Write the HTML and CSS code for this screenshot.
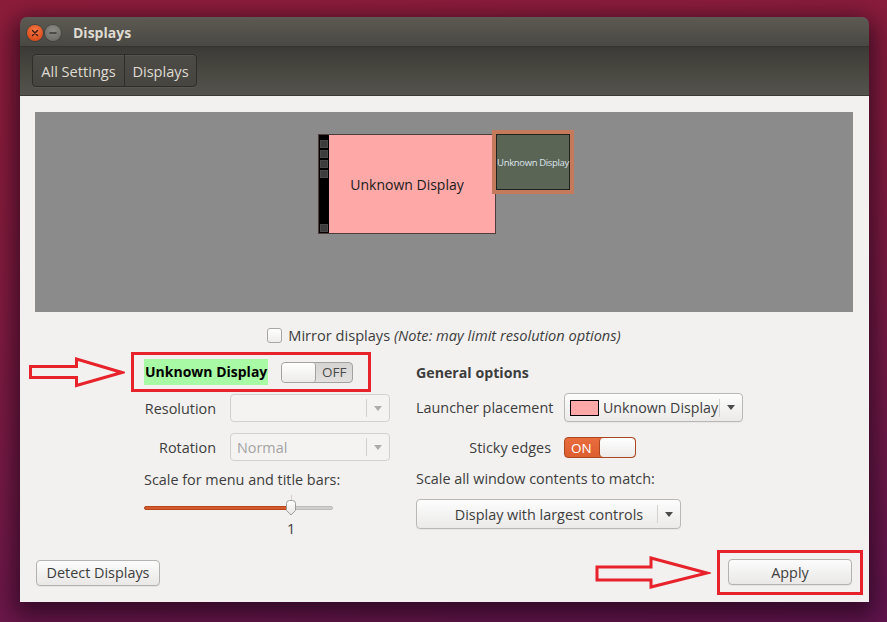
FILE: index.html
```html
<!DOCTYPE html>
<html>
<head>
<meta charset="utf-8">
<title>Displays</title>
<link rel="stylesheet" href="styles.css">
</head>
<body>
<div class="window">
  <div class="titlebar">
    <span class="wbtn close"><svg width="8" height="8" viewBox="0 0 8 8"><path d="M1.5 1.5L6.5 6.5M6.5 1.5L1.5 6.5" stroke="#3b1a10" stroke-width="1.4" stroke-linecap="round"/></svg></span>
    <span class="wbtn min"><svg width="8" height="8" viewBox="0 0 8 8"><path d="M1 4H7" stroke="#3a3935" stroke-width="1.5" stroke-linecap="round"/></svg></span>
    <span class="title">Displays</span>
  </div>
  <div class="toolbar">
    <div class="crumbs"><span class="crumb first">All Settings</span><span class="crumb second">Displays</span></div>
  </div>
  <div class="content">
    <div class="preview">
      <div class="mon main">
        <div class="launcher"><i></i><i></i><i></i><i></i><span class="gap"></span><i></i></div>
        <span class="mon-label">Unknown Display</span>
      </div>
      <div class="mon second"><span class="inner">Unknown Display</span></div>
    </div>
    <div class="mirror"><span class="check"></span><span>Mirror displays <em>(Note: may limit resolution options)</em></span></div>
    <div class="settings">
      <div class="col left">
        <div class="head boxed">
          <span class="hl">Unknown Display</span>
          <span class="switch off"><span class="knob"></span><span class="st">OFF</span></span>
        </div>
        <div class="form">
          <span class="lbl">Resolution</span>
          <div class="combo disabled"><span class="val"></span><span class="arr"><b></b></span></div>
          <span class="lbl">Rotation</span>
          <div class="combo disabled"><span class="val">Normal</span><span class="arr"><b></b></span></div>
        </div>
        <div class="caption">Scale for menu and title bars:</div>
        <div class="slider">
          <div class="track"><div class="fill" style="width:147px"></div></div>
          <span class="tick"></span>
          <svg class="thumb" width="12" height="16" viewBox="0 0 12 16"><defs><linearGradient id="tg" x1="0" y1="0" x2="0" y2="1"><stop offset="0" stop-color="#ffffff"/><stop offset="1" stop-color="#e6e5e3"/></linearGradient></defs><path d="M1.5 3.5Q1.5 0.5 4.5 0.5H7.5Q10.5 0.5 10.5 3.5V10.5L6 15L1.5 10.5Z" fill="url(#tg)" stroke="#9d9c9a"/></svg>
        </div>
        <div class="slider-val">1</div>
      </div>
      <div class="col right">
        <div class="head"><span class="section">General options</span></div>
        <div class="rform">
          <span class="lbl">Launcher placement</span>
          <div class="combo launcher-combo"><span class="swatch"></span><span class="val">Unknown Display</span><span class="arr"><b></b></span></div>
          <span class="lbl">Sticky edges</span>
          <span class="switch on"><span class="st">ON</span><span class="knob"></span></span>
        </div>
        <div class="caption">Scale all window contents to match:</div>
        <div class="combo wide"><span class="val">Display with largest controls</span><span class="arr"><b></b></span></div>
      </div>
    </div>
    <div class="footer">
      <button class="btn detect">Detect Displays</button>
      <div class="boxed apply-box"><button class="btn apply">Apply</button></div>
    </div>
  </div>
  <svg class="arrow arrow-left" width="96" height="31" viewBox="0 0 96 31"><polygon points="1.5,9.5 47.5,9.5 47.5,2 93,15.5 47.5,28.5 47.5,20.5 1.5,20.5" fill="none" stroke="#e8222a" stroke-width="3"/></svg>
  <svg class="arrow arrow-right" width="116" height="35" viewBox="0 0 116 35"><polygon points="2,12 56,12 56,3 112,18 56,32 56,25 2,25" fill="none" stroke="#e8222a" stroke-width="3"/></svg>
</div>
</body>
</html>
```

FILE: styles.css
```css
* { box-sizing: border-box; }
html, body { margin: 0; padding: 0; }
body {
  width: 887px;
  height: 622px;
  overflow: hidden;
  background: linear-gradient(172deg, #8d1d3a 0%, #861c3e 35%, #741a47 70%, #62154f 100%);
  font-family: "Open Sans", "Noto Sans", sans-serif;
  font-size: 14.4px;
  color: #3d3d3d;
}
.window {
  position: relative;
  margin: 17px 0 0 20px;
  width: 849px;
  height: 585px;
  border-radius: 7px 7px 0 0;
  display: flex;
  flex-direction: column;
  box-shadow: 0 8px 24px 6px rgba(30, 5, 25, 0.72);
}
.titlebar {
  height: 29px;
  flex: none;
  display: flex;
  align-items: center;
  padding: 2px 0 0 7px;
  background: linear-gradient(#5c5a52, #4a4843);
  border-radius: 7px 7px 0 0;
}
.wbtn {
  width: 16px;
  height: 16px;
  border-radius: 50%;
  display: flex;
  align-items: center;
  justify-content: center;
}
.close {
  background: radial-gradient(circle at 50% 35%, #f57b4a, #e0511f 65%, #c5421a);
  box-shadow: 0 0 0 1px rgba(0, 0, 0, 0.2);
}
.min {
  margin-left: 2px;
  background: radial-gradient(circle at 50% 35%, #8e8c86, #706e69 75%);
  box-shadow: 0 0 0 1px rgba(0, 0, 0, 0.15);
}
.title {
  margin-left: 12px;
  font-weight: 700;
  font-size: 14px;
  color: #dfdbd2;
}
.toolbar {
  height: 50px;
  flex: none;
  padding: 7px 0 0 12px;
  border-top: 1px solid #34332f;
  border-bottom: 1px solid #3a3935;
  background: linear-gradient(#3b3a36, #47463f 45%, #55534d);
}
.crumbs {
  display: inline-flex;
  height: 33px;
  border: 1px solid #2e2d29;
  border-radius: 4px;
  background: linear-gradient(#4d4b46, #47453f);
  box-shadow: inset 0 1px rgba(255, 255, 255, 0.05), 0 1px rgba(255, 255, 255, 0.05);
}
.crumb {
  display: flex;
  align-items: center;
  justify-content: center;
  color: #dfdbd2;
  font-size: 14.6px;
}
.crumb.first { width: 91px; }
.crumb.second { width: 72px; border-left: 1px solid #2e2d29; }
.content {
  flex: 1;
  display: flex;
  flex-direction: column;
  background: #f2f1f0;
  padding: 16px 16px 0 15px;
}
.preview {
  position: relative;
  flex: none;
  height: 200px;
  background: #8b8b8b;
}
.mon { position: absolute; }
.mon.main {
  left: 283px;
  top: 22px;
  width: 178px;
  height: 100px;
  background: #ffa8a8;
  border: 1px solid #4f3d3d;
  display: flex;
  align-items: center;
  justify-content: center;
}
.launcher {
  position: absolute;
  left: 0;
  top: 0;
  bottom: 0;
  width: 10px;
  background: #000;
  display: flex;
  flex-direction: column;
  align-items: center;
  padding: 5px 0 1px;
  gap: 2px;
}
.launcher i {
  display: block;
  width: 8px;
  height: 8px;
  background: #3c3c3c;
  border: 1px solid #4a4a4a;
}
.launcher .gap { flex: 1; }
.mon-label { font-size: 14px; color: #1a1a1a; }
.mon.second {
  left: 457px;
  top: 18px;
  width: 82px;
  height: 64px;
  border: 4px solid #c67a5c;
  z-index: 1;
}
.mon.second .inner {
  display: flex;
  align-items: center;
  justify-content: center;
  width: 100%;
  height: 100%;
  background: #5b6555;
  border: 1px solid #1f221e;
  font-size: 9.5px;
  color: #dde4ee;
  letter-spacing: -0.35px;
  white-space: nowrap;
}
.mirror {
  margin-top: 13px;
  height: 20px;
  display: flex;
  align-items: center;
  justify-content: center;
  gap: 6px;
  font-size: 14.6px;
}
.mirror em { font-style: italic; }
.check {
  width: 15px;
  height: 15px;
  border: 1px solid #a8a7a5;
  border-radius: 3px;
  background: linear-gradient(#ffffff, #eeedec);
}
.settings {
  margin-top: 7px;
  display: flex;
}
.col { display: flex; flex-direction: column; }
.col.left { margin-left: 96px; width: 240px; }
.col.right { margin-left: 45px; }
.head {
  height: 40px;
  display: flex;
  align-items: center;
}
.boxed { border: 3px solid #e8222a; }
.head.boxed { padding-left: 10px; }
.hl {
  background: #a8fba4;
  height: 26px;
  line-height: 26px;
  font-weight: 700;
  font-size: 14px;
  color: #000;
  padding: 0 1px;
}
.section { font-weight: 700; font-size: 14.2px; color: #3d3d3d; }
.switch {
  display: flex;
  width: 72px;
  height: 21px;
  border-radius: 4px;
  overflow: hidden;
  font-size: 13.5px;
}
.switch.off {
  margin-left: 13px;
  border: 1px solid #a3a2a0;
  background: linear-gradient(#d5d4d2, #e2e1df);
}
.switch.off .knob {
  width: 34px;
  background: linear-gradient(#ffffff, #ecebea);
  border-right: 1px solid #a3a2a0;
  border-radius: 3px;
}
.switch.off .st {
  flex: 1;
  display: flex;
  align-items: center;
  justify-content: center;
  color: #4a4a4a;
}
.switch.on {
  border: 1px solid #a9471f;
  background: linear-gradient(#e96c3c, #dd5e2e);
  justify-self: start;
  align-self: center;
}
.switch.on .st {
  flex: 1;
  display: flex;
  align-items: center;
  padding-left: 6px;
  color: #ffffff;
}
.switch.on .knob {
  width: 36px;
  background: linear-gradient(#ffffff, #ecebea);
  border-left: 1px solid #a9471f;
  border-radius: 4px;
}
.form {
  margin: 2px 0 0 13px;
  display: grid;
  grid-template-columns: 72px 160px;
  grid-auto-rows: 28px;
  column-gap: 14px;
  row-gap: 11px;
  align-items: center;
}
.lbl { text-align: right; white-space: nowrap; }
.combo {
  display: flex;
  align-items: center;
  height: 28px;
  border: 1px solid #b9b8b6;
  border-radius: 4px;
  background: linear-gradient(#fdfdfd, #ebeae9);
  box-shadow: 0 1px rgba(0, 0, 0, 0.04);
}
.combo .val { flex: 1; white-space: nowrap; }
.combo .arr {
  width: 23px;
  height: 18px;
  display: flex;
  align-items: center;
  justify-content: center;
  border-left: 1px solid #d3d2d0;
}
.combo .arr b {
  width: 0;
  height: 0;
  border-left: 4.5px solid transparent;
  border-right: 4.5px solid transparent;
  border-top: 5px solid #4c4c4c;
}
.combo.disabled {
  height: 28px;
  border-color: #d2d1cf;
  background: #f4f3f2;
  box-shadow: none;
}
.combo.disabled .val { padding-left: 6px; color: #a3a3a3; }
.combo.disabled .arr b { border-top-color: #acacac; }
.caption { height: 20px; line-height: 20px; white-space: nowrap; }
.col.left .caption { margin: 9px 0 0 13px; }
.slider {
  position: relative;
  margin: 8px 0 0 13px;
  width: 189px;
  height: 20px;
  display: flex;
  align-items: center;
}
.track {
  width: 100%;
  height: 4px;
  border-radius: 2px;
  background: #cfcecc;
  border: 1px solid #bdbcba;
}
.fill {
  height: 100%;
  margin: -1px 0 0 -1px;
  border-radius: 2px;
  background: #d55a2c;
  border: 1px solid #b8461d;
  box-sizing: content-box;
}
.tick {
  position: absolute;
  left: 147px;
  top: -3px;
  width: 1px;
  height: 6px;
  background: #cfcecc;
}
.thumb {
  position: absolute;
  left: 141px;
  top: 2px;
}
.slider-val {
  margin: 1px 0 0 13px;
  padding-left: 143px;
  height: 20px;
  line-height: 20px;
}
.rform {
  margin-top: 1px;
  display: grid;
  grid-template-columns: 135px auto;
  grid-auto-rows: 29px;
  column-gap: 13px;
  row-gap: 11px;
  align-items: center;
}
.launcher-combo {
  width: 179px;
  height: 29px;
  padding-left: 5px;
}
.launcher-combo .val { font-size: 14.2px; }
.swatch {
  width: 29px;
  height: 16px;
  background: #ffa8a8;
  border: 1px solid #000;
  margin-right: 4px;
}
.rform .switch.on { height: 21px; }
.col.right .caption { margin-top: 7px; }
.combo.wide {
  margin-top: 10px;
  width: 265px;
  height: 30px;
  padding-left: 24px;
}
.combo.wide .val { text-align: center; }
.footer {
  margin: auto -10px 7px 1px;
  display: flex;
  justify-content: space-between;
  align-items: center;
}
.btn {
  height: 26px;
  border: 1px solid #b3b2b0;
  border-radius: 4px;
  background: linear-gradient(#fcfcfc, #e9e8e7);
  font-family: inherit;
  font-size: 14.4px;
  color: #3d3d3d;
  padding: 0;
  box-shadow: 0 1px rgba(0, 0, 0, 0.05);
}
.btn.detect { width: 124px; }
.apply-box { padding: 6px 8px 7px 8px; display: flex; }
.btn.apply { width: 124px; }
.arrow { position: absolute; }
.arrow-left { left: 9px; top: 340px; }
.arrow-right { left: 575px; top: 538px; }
```
